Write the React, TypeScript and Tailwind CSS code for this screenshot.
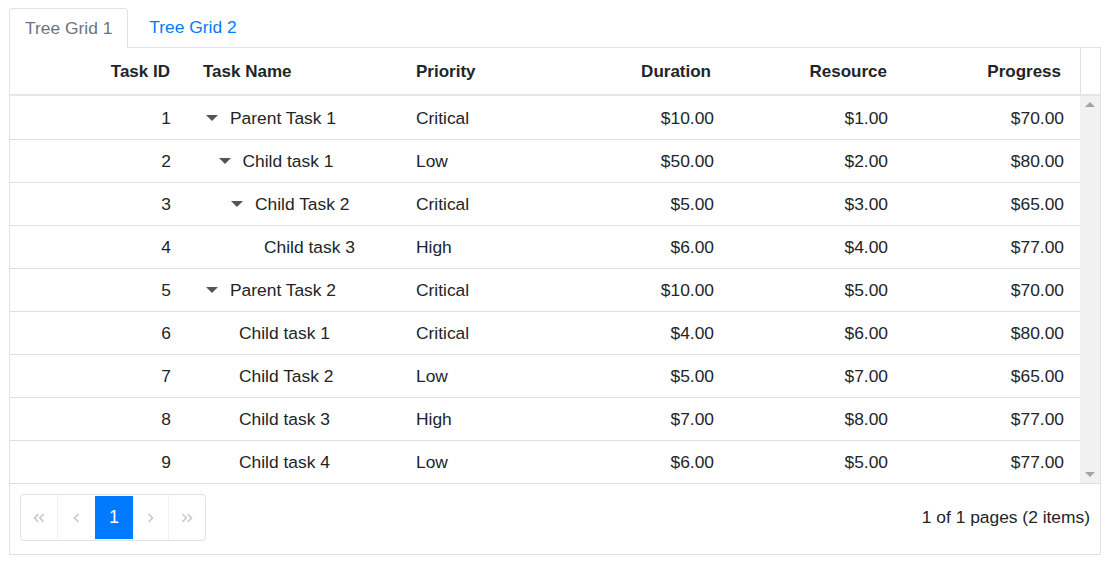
import React from 'react';

type Row = {
  id: number;
  name: string;
  level: number;
  parent: boolean;
  priority: string;
  duration: string;
  resource: string;
  progress: string;
};

const rows: Row[] = [
  { id: 1, name: 'Parent Task 1', level: 0, parent: true, priority: 'Critical', duration: '$10.00', resource: '$1.00', progress: '$70.00' },
  { id: 2, name: 'Child task 1', level: 1, parent: true, priority: 'Low', duration: '$50.00', resource: '$2.00', progress: '$80.00' },
  { id: 3, name: 'Child Task 2', level: 2, parent: true, priority: 'Critical', duration: '$5.00', resource: '$3.00', progress: '$65.00' },
  { id: 4, name: 'Child task 3', level: 3, parent: false, priority: 'High', duration: '$6.00', resource: '$4.00', progress: '$77.00' },
  { id: 5, name: 'Parent Task 2', level: 0, parent: true, priority: 'Critical', duration: '$10.00', resource: '$5.00', progress: '$70.00' },
  { id: 6, name: 'Child task 1', level: 1, parent: false, priority: 'Critical', duration: '$4.00', resource: '$6.00', progress: '$80.00' },
  { id: 7, name: 'Child Task 2', level: 1, parent: false, priority: 'Low', duration: '$5.00', resource: '$7.00', progress: '$65.00' },
  { id: 8, name: 'Child task 3', level: 1, parent: false, priority: 'High', duration: '$7.00', resource: '$8.00', progress: '$77.00' },
  { id: 9, name: 'Child task 4', level: 1, parent: false, priority: 'Low', duration: '$6.00', resource: '$5.00', progress: '$77.00' },
];

// indentation per tree level (12.5px steps)
const indent = ['ml-0', 'ml-[12.5px]', 'ml-[25px]', 'ml-[37.5px]'];

const cols = 'grid grid-cols-[177px_213px_153px_175px_175px_177px]';

function Caret() {
  return (
    <svg width="12" height="6" viewBox="0 0 12 6" className="block">
      <path d="M0 0h12L6 6z" fill="#555" />
    </svg>
  );
}

function Chevron({ dir, double }: { dir: 'left' | 'right'; double?: boolean }) {
  const one = dir === 'left' ? 'M5.5 1L1.5 5l4 4' : 'M1.5 1l4 4-4 4';
  const two = dir === 'left' ? 'M11 1L7 5l4 4' : 'M7 1l4 4-4 4';
  return (
    <svg width={double ? 12 : 7} height="10" viewBox={double ? '0 0 12.5 10' : '0 0 7 10'} fill="none" stroke="#c8c8c8" strokeWidth="1.6">
      <path d={one} />
      {double && <path d={two} />}
    </svg>
  );
}

function TaskName({ row }: { row: Row }) {
  return (
    <div className={`flex items-center ${indent[row.level]}`}>
      {row.parent ? (
        <>
          <span className="w-[27px] pl-[3px] flex items-center">
            <Caret />
          </span>
          <span>{row.name}</span>
        </>
      ) : (
        <span className="pl-[23.5px]">{row.name}</span>
      )}
    </div>
  );
}

export default function App() {
  return (
    <div className="w-[1113px] h-[567px] bg-white pl-[9px] pt-[8px] text-[17.4px] text-[#212529]" style={{ fontFamily: '"Liberation Sans", Arial, sans-serif' }}>
      {/* Tabs */}
      <div className="flex w-[1092px] border-b border-[#dee2e6]">
        <div className="h-[39px] px-[15px] -mb-px box-content flex items-center bg-white border border-b-0 border-[#dee2e6] rounded-t-[4px] text-[#6c757d]">
          Tree Grid 1
        </div>
        <div className="h-[39px] pl-[21px] pr-[16px] flex items-center text-[#007bff]">Tree Grid 2</div>
      </div>

      {/* Grid */}
      <div className="w-[1092px] border border-t-0 border-[#dee2e6]">
        {/* Header */}
        <div className="flex h-[48px] border-b-2 border-[#e6e6e6] font-bold text-[17px]">
          <div className={`${cols} w-[1070px] pt-[1px]`}>
            <div className="flex items-center justify-end pr-[17px]">Task ID</div>
            <div className="flex items-center pl-[16px]">Task Name</div>
            <div className="flex items-center pl-[16px]">Priority</div>
            <div className="flex items-center justify-end pr-[17px]">Duration</div>
            <div className="flex items-center justify-end pr-[16px]">Resource</div>
            <div className="flex items-center justify-end pr-[19px]">Progress</div>
          </div>
          <div className="flex-1 border-l border-[#e0e0e0]" />
        </div>

        {/* Body */}
        <div className="flex">
          <div className="w-[1070px]">
            {rows.map((r, i) => (
              <div key={r.id} className={`${cols} h-[43px] pt-[1px] ${i > 0 ? 'border-t border-[#e0e0e0]' : ''}`}>
                <div className="flex items-center justify-end pr-[16px]">{r.id}</div>
                <div className="flex items-center pl-[16px]">
                  <TaskName row={r} />
                </div>
                <div className="flex items-center pl-[16px]">{r.priority}</div>
                <div className="flex items-center justify-end pr-[14px]">{r.duration}</div>
                <div className="flex items-center justify-end pr-[15px]">{r.resource}</div>
                <div className="flex items-center justify-end pr-[16px]">{r.progress}</div>
              </div>
            ))}
          </div>
          {/* Scrollbar */}
          <div className="flex-1 bg-[#f1f1f1] flex flex-col items-center justify-between py-[6px]">
            <svg width="10" height="5" viewBox="0 0 10 5">
              <path d="M0 5L5 0l5 5z" fill="#a3a3a3" />
            </svg>
            <svg width="10" height="5" viewBox="0 0 10 5">
              <path d="M0 0h10L5 5z" fill="#a3a3a3" />
            </svg>
          </div>
        </div>

        {/* Pager */}
        <div className="h-[71px] border-t border-[#e0e0e0] flex items-start justify-between pt-[10px] pl-[10px] pr-[10px]">
          <div className="flex h-[47px] border border-[#dee2e6] rounded-[4px] overflow-hidden">
            <div className="w-[37px] flex items-center justify-center border-r border-[#f0f0f0]">
              <Chevron dir="left" double />
            </div>
            <div className="w-[37px] flex items-center justify-center">
              <Chevron dir="left" />
            </div>
            <div className="w-[38px] my-px flex items-center justify-center bg-[#007bff] text-white text-[18px]">1</div>
            <div className="w-[36px] flex items-center justify-center border-r border-[#f0f0f0]">
              <Chevron dir="right" />
            </div>
            <div className="w-[36px] flex items-center justify-center">
              <Chevron dir="right" double />
            </div>
          </div>
          <div className="h-[47px] flex items-center">1 of 1 pages (2 items)</div>
        </div>
      </div>
    </div>
  );
}
